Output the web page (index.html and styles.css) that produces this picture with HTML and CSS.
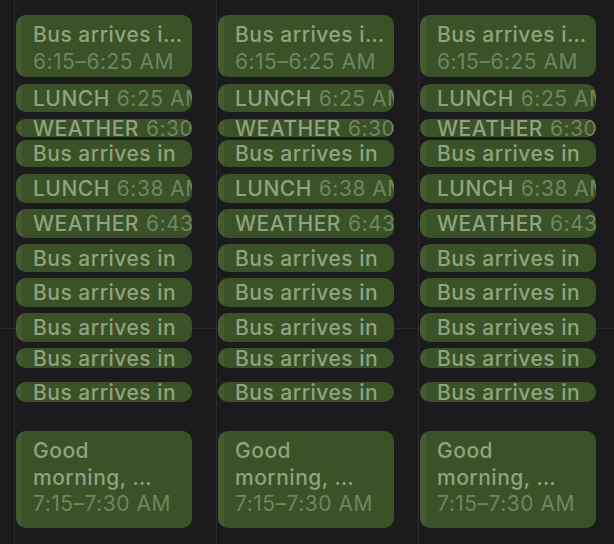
FILE: index.html
```html
<!DOCTYPE html>
<html>
<head>
<meta charset="utf-8">
<link rel="stylesheet" href="styles.css">
</head>
<body>
<div class="cal">
  <div class="gutter"></div>
  <div class="day">
    <div class="ev multi" style="top:15px;height:62px"><div class="t ell">Bus arrives in 10 minutes</div><div class="tm">6:15–6:25 AM</div></div>
    <div class="ev" style="top:84px;height:28px"><span class="t">LUNCH</span><span class="tm">6:25 AM</span></div>
    <div class="ev" style="top:119px;height:18px"><span class="t">WEATHER</span><span class="tm">6:30 AM</span></div>
    <div class="ev" style="top:140px;height:27px"><span class="t">Bus arrives in</span></div>
    <div class="ev" style="top:174px;height:29px"><span class="t">LUNCH</span><span class="tm">6:38 AM</span></div>
    <div class="ev" style="top:209px;height:29px"><span class="t">WEATHER</span><span class="tm">6:43 AM</span></div>
    <div class="ev" style="top:244px;height:28px"><span class="t">Bus arrives in</span></div>
    <div class="ev" style="top:278px;height:29px"><span class="t">Bus arrives in</span></div>
    <div class="ev" style="top:313px;height:29px"><span class="t">Bus arrives in</span></div>
    <div class="ev" style="top:348px;height:20px"><span class="t">Bus arrives in</span></div>
    <div class="ev" style="top:382px;height:20px"><span class="t">Bus arrives in</span></div>
    <div class="ev multi" style="top:431px;height:97px"><div class="t">Good<br>morning, …</div><div class="tm">7:15–7:30 AM</div></div>
  </div>
  <div class="day">
    <div class="ev multi" style="top:15px;height:62px"><div class="t ell">Bus arrives in 10 minutes</div><div class="tm">6:15–6:25 AM</div></div>
    <div class="ev" style="top:84px;height:28px"><span class="t">LUNCH</span><span class="tm">6:25 AM</span></div>
    <div class="ev" style="top:119px;height:18px"><span class="t">WEATHER</span><span class="tm">6:30 AM</span></div>
    <div class="ev" style="top:140px;height:27px"><span class="t">Bus arrives in</span></div>
    <div class="ev" style="top:174px;height:29px"><span class="t">LUNCH</span><span class="tm">6:38 AM</span></div>
    <div class="ev" style="top:209px;height:29px"><span class="t">WEATHER</span><span class="tm">6:43 AM</span></div>
    <div class="ev" style="top:244px;height:28px"><span class="t">Bus arrives in</span></div>
    <div class="ev" style="top:278px;height:29px"><span class="t">Bus arrives in</span></div>
    <div class="ev" style="top:313px;height:29px"><span class="t">Bus arrives in</span></div>
    <div class="ev" style="top:348px;height:20px"><span class="t">Bus arrives in</span></div>
    <div class="ev" style="top:382px;height:20px"><span class="t">Bus arrives in</span></div>
    <div class="ev multi" style="top:431px;height:97px"><div class="t">Good<br>morning, …</div><div class="tm">7:15–7:30 AM</div></div>
  </div>
  <div class="day">
    <div class="ev multi" style="top:15px;height:62px"><div class="t ell">Bus arrives in 10 minutes</div><div class="tm">6:15–6:25 AM</div></div>
    <div class="ev" style="top:84px;height:28px"><span class="t">LUNCH</span><span class="tm">6:25 AM</span></div>
    <div class="ev" style="top:119px;height:18px"><span class="t">WEATHER</span><span class="tm">6:30 AM</span></div>
    <div class="ev" style="top:140px;height:27px"><span class="t">Bus arrives in</span></div>
    <div class="ev" style="top:174px;height:29px"><span class="t">LUNCH</span><span class="tm">6:38 AM</span></div>
    <div class="ev" style="top:209px;height:29px"><span class="t">WEATHER</span><span class="tm">6:43 AM</span></div>
    <div class="ev" style="top:244px;height:28px"><span class="t">Bus arrives in</span></div>
    <div class="ev" style="top:278px;height:29px"><span class="t">Bus arrives in</span></div>
    <div class="ev" style="top:313px;height:29px"><span class="t">Bus arrives in</span></div>
    <div class="ev" style="top:348px;height:20px"><span class="t">Bus arrives in</span></div>
    <div class="ev" style="top:382px;height:20px"><span class="t">Bus arrives in</span></div>
    <div class="ev multi" style="top:431px;height:97px"><div class="t">Good<br>morning, …</div><div class="tm">7:15–7:30 AM</div></div>
  </div>
</div>
</body>
</html>
```
FILE: styles.css
```css
html, body {
  margin: 0;
  padding: 0;
  background: #1b1b1d;
  overflow: hidden;
}
.cal {
  display: flex;
  width: 620px;
  height: 544px;
  background: linear-gradient(to bottom, transparent 328px, #2a2a2c 328px, #2a2a2c 329px, transparent 329px);
  font-family: Inter, "Liberation Sans", sans-serif;
  font-size: 21px;
  letter-spacing: 0.5px;
}
.gutter {
  width: 14px;
  flex: none;
}
.day {
  position: relative;
  width: 201px;
  flex: none;
  border-left: 1px solid #2a2a2c;
}
.ev {
  position: absolute;
  left: 1px;
  width: 176px;
  box-sizing: border-box;
  display: flex;
  align-items: center;
  overflow: hidden;
  white-space: nowrap;
  padding: 0 6px 0 17px;
  border-radius: 10px;
  background: linear-gradient(to right, #425c2d 0, #425c2d 6px, #3b5128 6px);
  line-height: 1;
}
.t {
  color: #8fa47e;
  font-weight: 500;
  flex: none;
}
.tm {
  color: #6f865f;
  font-weight: 400;
  margin-left: 7px;
  flex: none;
}
.multi {
  flex-direction: column;
  align-items: stretch;
  justify-content: flex-start;
  padding: 7px 9px 0 17px;
  line-height: 26.5px;
  white-space: normal;
}
.multi .tm {
  margin-left: 0;
}
.ell {
  flex: none;
  white-space: nowrap;
  overflow: hidden;
  text-overflow: ellipsis;
}
```
